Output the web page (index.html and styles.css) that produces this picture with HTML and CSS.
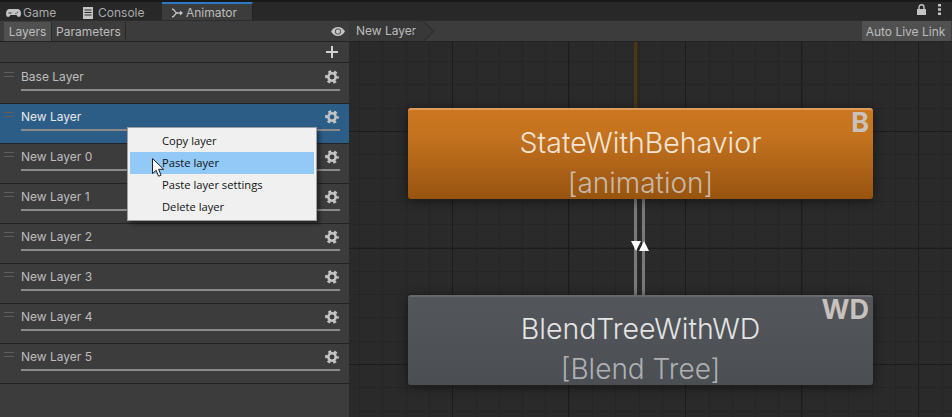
FILE: index.html
```html
<!DOCTYPE html>
<html lang="en">
<head>
  <meta charset="UTF-8">
  <title>Animator</title>
  <link rel="stylesheet" href="styles.css">
</head>
<body>
  <svg class="defs" width="0" height="0">
    <symbol id="gear" viewBox="0 0 14 14">
      <circle cx="7" cy="7" r="3.7" fill="none" stroke="currentColor" stroke-width="2.6"/>
      <circle cx="7" cy="7" r="5.7" fill="none" stroke="currentColor" stroke-width="2.4" stroke-dasharray="3 2.97" stroke-dashoffset="1.5"/>
    </symbol>
  </svg>

  <div class="tabbar">
    <div class="tab">
      <svg class="tab-icon" width="15" height="10" viewBox="0 0 15 10"><path fill="#c4c4c4" d="M3.5 1h8C13.5 1 15 3 15 5.5S14 9 12.8 9c-1 0-1.6-1-2.3-2h-6C3.800 8 3.200 9 2.200 9 1 9 0 8 0 5.500S1.500 1 3.500 1z"/><path fill="#282828" d="M2.500 4.500h3v1h-3zM11 3.800h1v1h-1zM9.500 5h1v1h-1z"/></svg>
      <span>Game</span>
    </div>
    <div class="tab">
      <svg class="tab-icon" width="10" height="12" viewBox="0 0 10 12"><path fill="#c4c4c4" d="M0 0h10v12H0z"/><path fill="#282828" d="M1.500 2.500h7v1h-7zM1.500 5h7v1h-7zM1.500 7.500h7v1h-7z"/></svg>
      <span>Console</span>
    </div>
    <div class="tab tab-active">
      <svg class="tab-icon" width="11" height="10" viewBox="0 0 11 10"><path fill="none" stroke="#c4c4c4" stroke-width="1.300" d="M0 1c3 0 3 4 5 4h5M0 9c3 0 3-4 5-4"/><path fill="#c4c4c4" d="M8 2.500 11 5 8 7.500z"/></svg>
      <span>Animator</span>
    </div>
    <div class="tabbar-tools">
      <svg width="9" height="11" viewBox="0 0 9 11"><path fill="#c4c4c4" d="M0 5h9v6H0z"/><path fill="none" stroke="#c4c4c4" stroke-width="1.400" d="M2 5V3.200a2.500 2.500 0 0 1 5 0V5"/></svg>
      <svg width="3" height="11" viewBox="0 0 3 11"><path fill="#c4c4c4" d="M0 0h3v2.500H0zM0 4.200h3v2.500H0zM0 8.400h3v2.600H0z"/></svg>
    </div>
  </div>

  <div class="main">
    <aside class="panel">
      <div class="panel-toolbar">
        <button class="tool-btn tool-btn-on">Layers</button>
        <button class="tool-btn">Parameters</button>
        <svg class="eye" width="14" height="9" viewBox="0 0 14 9"><path fill="#c4c4c4" d="M7 0c3 0 5.500 2 7 4.500C12.500 7 10 9 7 9S1.500 7 0 4.500C1.500 2 4 0 7 0z"/><circle cx="7" cy="4.500" r="3" fill="#3c3c3c"/><circle cx="7" cy="4.500" r="2.200" fill="#c4c4c4"/></svg>
      </div>
      <div class="add-row">
        <svg width="12" height="12" viewBox="0 0 12 12"><path fill="#d2d2d2" d="M5 0h2v5h5v2H7v5H5V7H0V5h5z"/></svg>
      </div>
      <ul class="layers">
        <li class="layer"><span class="handle"></span><div class="layer-body"><div class="layer-head"><span>Base Layer</span><svg class="gear"><use href="#gear"/></svg></div><div class="slider"></div></div></li>
        <li class="layer layer-selected"><span class="handle"></span><div class="layer-body"><div class="layer-head"><span>New Layer</span><svg class="gear"><use href="#gear"/></svg></div><div class="slider"></div></div></li>
        <li class="layer"><span class="handle"></span><div class="layer-body"><div class="layer-head"><span>New Layer 0</span><svg class="gear"><use href="#gear"/></svg></div><div class="slider"></div></div></li>
        <li class="layer"><span class="handle"></span><div class="layer-body"><div class="layer-head"><span>New Layer 1</span><svg class="gear"><use href="#gear"/></svg></div><div class="slider"></div></div></li>
        <li class="layer"><span class="handle"></span><div class="layer-body"><div class="layer-head"><span>New Layer 2</span><svg class="gear"><use href="#gear"/></svg></div><div class="slider"></div></div></li>
        <li class="layer"><span class="handle"></span><div class="layer-body"><div class="layer-head"><span>New Layer 3</span><svg class="gear"><use href="#gear"/></svg></div><div class="slider"></div></div></li>
        <li class="layer"><span class="handle"></span><div class="layer-body"><div class="layer-head"><span>New Layer 4</span><svg class="gear"><use href="#gear"/></svg></div><div class="slider"></div></div></li>
        <li class="layer"><span class="handle"></span><div class="layer-body"><div class="layer-head"><span>New Layer 5</span><svg class="gear"><use href="#gear"/></svg></div><div class="slider"></div></div></li>
      </ul>
    </aside>

    <section class="graph">
      <div class="graph-toolbar">
        <div class="crumb">New Layer</div>
        <button class="live-link">Auto Live Link</button>
      </div>
      <div class="canvas">
        <div class="entry-line"></div>
        <div class="transition transition-a"></div>
        <div class="transition transition-b"></div>
        <div class="arrow-down"></div>
        <div class="arrow-up"></div>
        <div class="node node-orange">
          <div class="node-title">StateWithBehavior</div>
          <div class="node-sub">[animation]</div>
          <div class="node-badge">B</div>
        </div>
        <div class="node node-grey">
          <div class="node-title">BlendTreeWithWD</div>
          <div class="node-sub">[Blend Tree]</div>
          <div class="node-badge">WD</div>
        </div>
      </div>
    </section>
  </div>

  <div class="menu">
    <div class="menu-item">Copy layer</div>
    <div class="menu-item menu-item-hover">Paste layer</div>
    <div class="menu-item">Paste layer settings</div>
    <div class="menu-item">Delete layer</div>
  </div>
  <svg class="cursor" width="13" height="20" viewBox="0 0 13 20"><path fill="#fff" stroke="#222" stroke-width="1" d="M.5.500v15l3.600-3.300 2.400 6 2.600-1-2.500-5.900h5z"/></svg>
</body>
</html>
```

FILE: styles.css
```css
* {
  box-sizing: border-box;
}

html,
body {
  height: 100%;
}

body {
  margin: 0;
  padding-top: 2px;
  overflow: hidden;
  display: flex;
  flex-direction: column;
  background-color: #191919;
  color: #bcbcbc;
  font-family: Inter, "Liberation Sans", sans-serif;
  font-size: 12px;
}

.defs {
  position: absolute;
}

/* window tabs */
.tabbar {
  display: flex;
  height: 18px;
  background-color: #282828;
}

.tab {
  display: flex;
  align-items: center;
  gap: 2px;
  padding: 3px 0 0 6px;
  width: 74px;
  color: #aaaaaa;
}

.tab:nth-child(2) {
  width: 88px;
  padding-left: 9px;
  gap: 5px;
}

.tab-active {
  width: 91px;
  padding: 1px 0 0 10px;
  gap: 3px;
  background-color: #3c3c3c;
  border-top: 2px solid #2c7ac5;
  border-right: 1px solid #222;
  color: #bcbcbc;
}

.tabbar-tools {
  margin-left: auto;
  display: flex;
  align-items: center;
  gap: 12px;
  padding: 0 11px 3px 0;
}

.main {
  flex: 1;
  display: flex;
  min-height: 0;
}

/* layers panel */
.panel {
  width: 349px;
  background-color: #3c3c3c;
}

.panel-toolbar {
  display: flex;
  align-items: stretch;
  height: 22px;
  padding: 1px 4px 0 4px;
  border-top: 1px solid #2d2d2d;
  border-bottom: 1px solid #232323;
}

.tool-btn {
  margin: 0;
  padding: 0 4px;
  border: none;
  border-right: 1px solid #282828;
  background-color: #3c3c3c;
  color: #bcbcbc;
  font: inherit;
}

.tool-btn-on {
  width: 48px;
  background-color: #505050;
}

.eye {
  margin: auto 0 auto auto;
}

.add-row {
  display: flex;
  justify-content: flex-end;
  align-items: center;
  height: 21px;
  padding-right: 11px;
  border-bottom: 1px solid #232323;
}

.layers {
  list-style: none;
  margin: 0;
  padding: 1px 0 0;
}

.layer {
  display: flex;
  height: 40px;
  padding: 0 9px 0 4px;
  border-bottom: 1px solid #232323;
}

.layer-selected {
  background-color: #2c5d87;
  color: #e8e8e8;
}

.handle {
  width: 10px;
  height: 5px;
  margin: 8px 7px 0 0;
  border-top: 1px solid #5e5e5e;
  border-bottom: 1px solid #5e5e5e;
}

.layer-body {
  flex: 1;
}

.layer-head {
  display: flex;
  justify-content: space-between;
  align-items: center;
  height: 25px;
  padding: 0 1px 0 0;
}

.gear {
  width: 14px;
  height: 14px;
  color: #c4c4c4;
}

.slider {
  height: 2px;
  background-color: #8a8a8a;
}

/* graph side */
.graph {
  flex: 1;
  display: flex;
  flex-direction: column;
  min-width: 0;
}

.graph-toolbar {
  display: flex;
  height: 22px;
  background-color: #3c3c3c;
  border-top: 1px solid #2d2d2d;
  border-bottom: 1px solid #232323;
  padding-right: 1px;
}

.crumb {
  position: relative;
  width: 75px;
  padding-left: 7px;
  line-height: 20px;
  background-color: #383838;
}

.crumb::after {
  content: "";
  position: absolute;
  top: 3px;
  right: -7px;
  width: 14px;
  height: 14px;
  background-color: #383838;
  border-top: 1px solid #2b2b2b;
  border-right: 1px solid #2b2b2b;
  transform: rotate(45deg);
}

.live-link {
  margin: 0 0 0 auto;
  width: 89px;
  padding: 0 2px 0 0;
  border: none;
  background-color: #505050;
  color: #bcbcbc;
  font: inherit;
}

.canvas {
  position: relative;
  flex: 1;
  overflow: hidden;
  background-color: #2a2a2a;
  background-image:
    repeating-linear-gradient(to right, transparent 0 103px, #1c1c1c 103px 104px, transparent 104px 116.5px),
    repeating-linear-gradient(to bottom, transparent 0 89px, #1c1c1c 89px 90px, transparent 90px 116.5px),
    repeating-linear-gradient(to right, transparent 0 10px, #252525 10px 11px, transparent 11px 23.3px),
    repeating-linear-gradient(to bottom, transparent 0 19px, #252525 19px 20px, transparent 20px 23.3px);
}

.entry-line {
  position: absolute;
  left: 285px;
  top: 0;
  width: 3px;
  height: 66px;
  background-color: #4e360f;
}

.transition {
  position: absolute;
  top: 157px;
  width: 3px;
  height: 96px;
  background-color: #7a7a7a;
}

.transition-a {
  left: 285px;
}

.transition-b {
  left: 293px;
}

.arrow-down,
.arrow-up {
  position: absolute;
  top: 199px;
  border-left: 5px solid transparent;
  border-right: 5px solid transparent;
}

.arrow-down {
  left: 282px;
  border-top: 10px solid #fff;
}

.arrow-up {
  left: 290px;
  border-bottom: 10px solid #fff;
}

.node {
  position: absolute;
  left: 59px;
  width: 465px;
  border-radius: 3px;
  text-align: center;
  box-shadow: 0 2px 12px rgba(0, 0, 0, 0.45);
}

.node-orange {
  top: 66px;
  height: 91px;
  background: linear-gradient(#cb771f, #c4721e 30%, #97530f);
  border-top: 2px solid #e09c5a;
  color: #f1e4d8;
}

.node-grey {
  top: 253px;
  height: 90px;
  background: linear-gradient(#53565a, #4b4e52);
  border-top: 2px solid #67696e;
  color: #e4e4e4;
}

.node-title {
  font-size: 28.5px;
  font-weight: 300;
  line-height: 32px;
  margin-top: 17px;
}

.node-sub {
  font-size: 28px;
  font-weight: 300;
  line-height: 32px;
  margin-top: 8px;
  color: #c8baac;
}

.node-grey .node-title {
  margin-top: 16px;
}

.node-grey .node-sub {
  margin-top: 8px;
  color: #aeb0b3;
}

.node-badge {
  position: absolute;
  top: -2px;
  right: 4px;
  font-size: 27px;
  font-weight: 700;
  line-height: 30px;
  color: #c8c2bc;
}

/* context menu */
.menu {
  position: absolute;
  left: 127px;
  top: 127px;
  width: 190px;
  height: 94px;
  padding: 2px;
  background-color: #f0f0f0;
  border: 1px solid #a0a0a0;
  box-shadow: 3px 3px 4px rgba(0, 0, 0, 0.4);
}

.menu-item {
  height: 22px;
  padding-left: 32px;
  line-height: 22px;
  color: #111;
  font-family: "Open Sans", "Liberation Sans", sans-serif;
  font-size: 11.2px;
}

.menu-item-hover {
  background-color: #91c9f7;
}

.cursor {
  position: absolute;
  left: 152px;
  top: 158px;
}
```
